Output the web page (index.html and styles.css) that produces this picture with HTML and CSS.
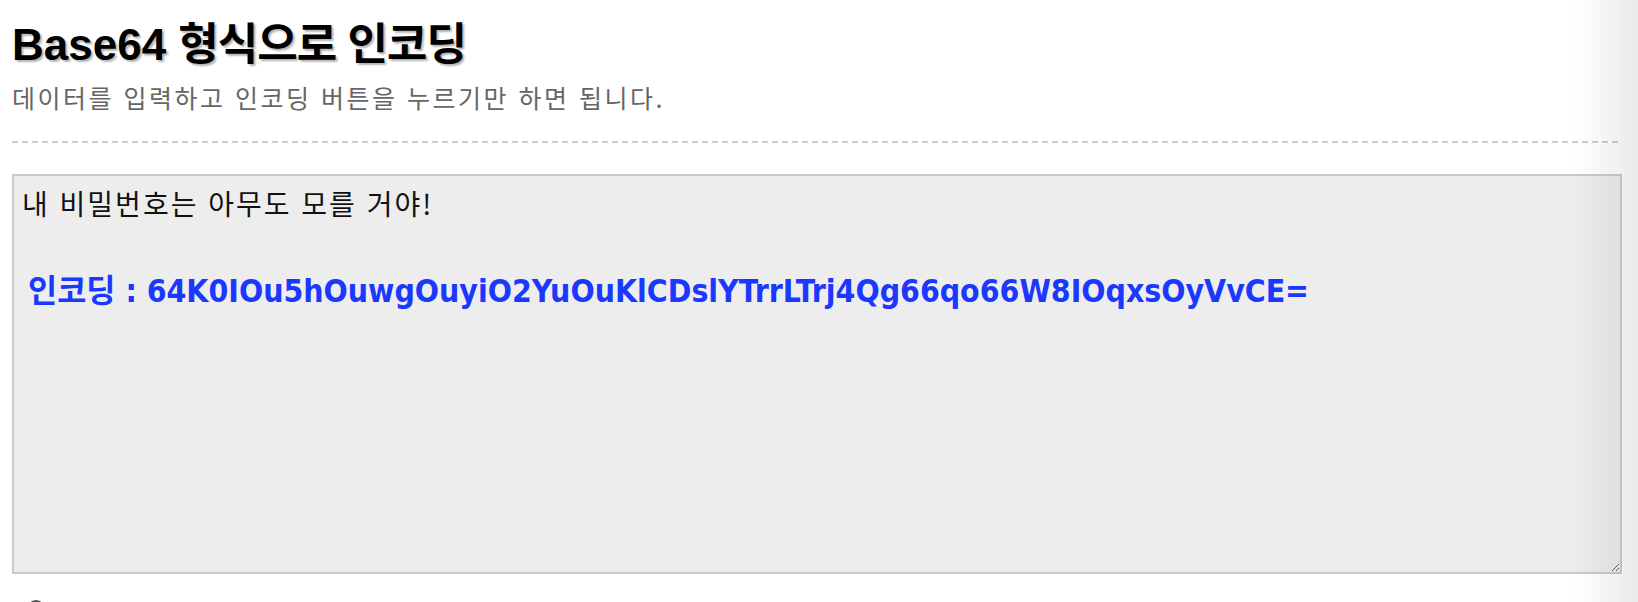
FILE: index.html
```html
<!DOCTYPE html>
<html lang="ko">
<head>
<meta charset="utf-8">
<title>Base64 형식으로 인코딩</title>
<link rel="stylesheet" href="styles.css">
</head>
<body>
<div class="page">
  <header class="intro">
    <h1 class="title">Base64 <span class="title-ko">형식으로 인코딩</span></h1>
    <p class="lead">데이터를 입력하고 인코딩 버튼을 누르기만 하면 됩니다.</p>
  </header>
  <hr class="divider">
  <div class="editor">
    <p class="source">내 비밀번호는 아무도 모를 거야!</p>
    <p class="result">인코딩 : 64K0IOu5hOuwgOuyiO2YuOuKlCDslYTrrLTrj4Qg66qo66W8IOqxsOyVvCE=</p>
  </div>
  <div class="options">
    <span class="radio"></span>
  </div>
</div>
<div class="edge-shade"></div>
</body>
</html>
```

FILE: styles.css
```css
html, body {
  margin: 0;
  padding: 0;
  background: #ffffff;
  overflow: hidden;
}

.page {
  padding: 15px 16px 0 12px;
  font-family: "Liberation Sans", "Noto Sans CJK KR", sans-serif;
}

.title {
  margin: 0;
  font-size: 44px;
  line-height: 52px;
  font-weight: bold;
  color: #000;
  text-shadow: 2px 2px 2px rgba(0, 0, 0, 0.3);
}

.title-ko {
  font-family: "Noto Sans CJK KR", sans-serif;
  letter-spacing: -1px;
}

.lead {
  margin: 10px 0 0 0;
  font-family: "Noto Sans CJK KR", sans-serif;
  font-size: 25px;
  line-height: 32px;
  color: #666;
  letter-spacing: 2.5px;
}

.divider {
  margin: 28px 0 0 0;
  border: 0;
  height: 2px;
  background: repeating-linear-gradient(90deg, #cccccc 0 6px, transparent 6px 10px);
}

.editor {
  margin-top: 31px;
  height: 400px;
  border: 2px solid #cbcbcb;
  background: #ededed;
  padding: 8px 8px;
  overflow: auto;
  resize: vertical;
  box-sizing: border-box;
}

.source {
  margin: 0;
  font-family: "Noto Sans CJK KR", sans-serif;
  font-size: 28px;
  line-height: 38px;
  color: #111;
  letter-spacing: 2px;
}

.result {
  margin: 50px 0 0 6px;
  font-family: "DejaVu Sans Condensed", "Noto Sans CJK KR", sans-serif;
  font-stretch: condensed;
  font-weight: bold;
  font-size: 31.7px;
  line-height: 38px;
  color: #1b38ff;
}

.options {
  padding: 26px 0 0 15px;
}

.radio {
  display: block;
  width: 14px;
  height: 14px;
  border: 2px solid #555;
  border-radius: 50%;
}

.edge-shade {
  position: fixed;
  top: 0;
  right: 0;
  bottom: 0;
  width: 66px;
  background: linear-gradient(90deg, rgba(0, 0, 0, 0) 0%, rgba(0, 0, 0, 0.08) 100%);
  pointer-events: none;
}
```
